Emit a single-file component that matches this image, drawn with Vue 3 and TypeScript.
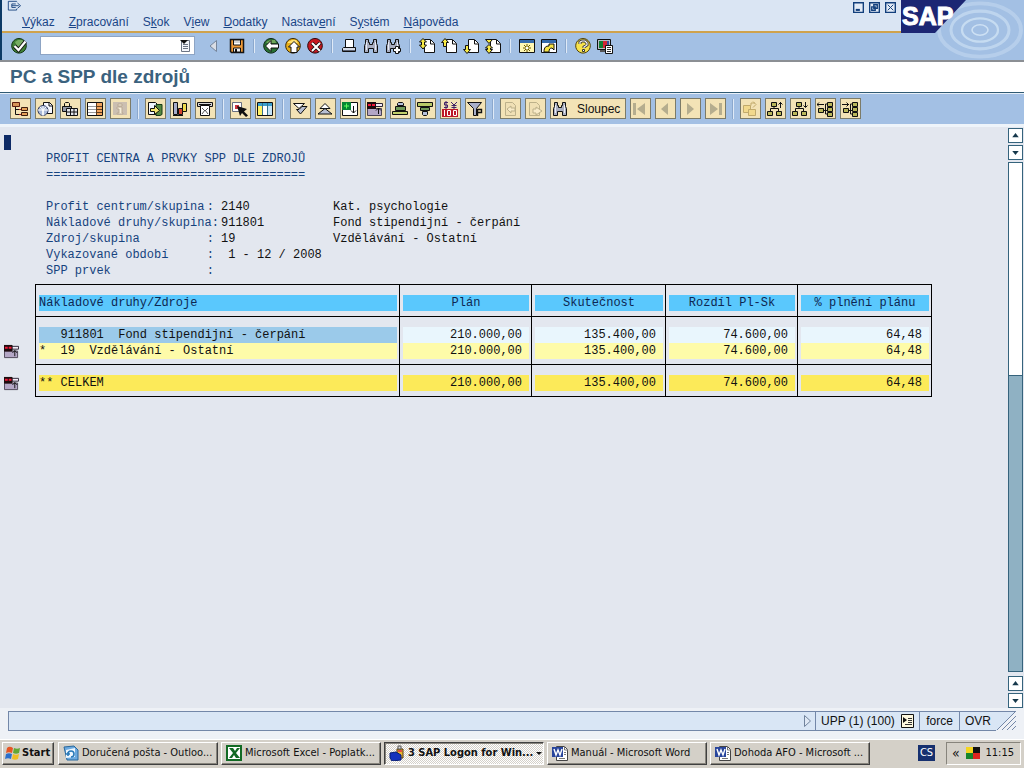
<script setup lang="ts">
import { defineComponent, h } from 'vue'

// [path data, fill, stroke?, stroke width?]
type Shape = [string, string, string?, number?]

const K = '#101010'
const doc = 'M5.5 1.5h6l4 4v9h-10z'
const disc = 'M8 .5a7.3 7.3 0 1 0 .01 0z'
const binoculars: Shape[] = [
  ['M2.5 1.5h3v3h1v2h3v-2h1v-3h3v4l1 2v7h-4v-4h-5v4h-4v-7l1-2z', '#a9aec0', K],
  ['M3.5 4v8M12.5 4v8', 'none', '#e9ecf4'],
]
const orgBox = (x: number, y: number): Shape => [`M${x}.5 ${y}.5h5v4h-5z`, '#b9b75a', K]

const icons: Record<string, Shape[]> = {
  session: [['M11 2V1.5H1.5v10H11V10', 'none', '#123f7c'], ['M10 4.5H5.5v4H10M5.5 6.5h8M12 3.5l3.5 3L12 9.5', 'none', '#123f7c']],
  ok: [[disc, '#3f7f36', '#123412'], ['M4 4l3-2h4l2 2v2l-6 4z', '#77ad62'], ['M3.5 8l4 4 7-8.5', 'none', K, 4], ['M3.5 8l4 4 7-8.5', 'none', '#fff', 2.2]],
  collapse: [['M11.5 2.5v11L5 8z', '#d9dde5', '#75859b']],
  save: [['M1.5 1.5h13v13h-12l-1-1z', '#ef9a38', '#151515', 1.5], ['M4.5 2h7v5h-7z', '#fff', K], ['M4.5 10h7v4h-7z', '#efefef', K], ['M6 11h2v3H6z', K], ['M5 4h6', 'none', '#aaa']],
  back: [[disc, '#287033', '#102817'], ['M3 4l4-2h5l1 3H4z', '#70a75a'], ['M8 2.5L2.5 8 8 13.5v-3.5h7.5V6H8z', '#fff', K]],
  exit: [[disc, '#e7ae18', '#372707'], ['M3 4l4-2h4l2 3H3z', '#ffe374'], ['M9 3.5L3.5 9H6v5.5h6V9h2.5z', '#fff', K]],
  cancel: [[disc, '#c71920', '#2d0709'], ['M5 5l8 8M13 5l-8 8', 'none', K, 3.6], ['M5 5l8 8M13 5l-8 8', 'none', '#fff', 2]],
  print: [['M4.5 1.5h8v8h-8z', '#fff', K], ['M2.5 9.5h12v4h-13v-3z', '#d7dce7', K], ['M2 12.5h12', 'none', '#5b6374']],
  find: binoculars,
  findNext: [...binoculars, ['M8.5 10.5h2v-2h3v2h2v3h-2v2h-3v-2h-2z', '#fff', K]],
  first: [[doc, '#fff', K], ['M11.5 2v4H15', 'none', K], ['M4 .5l-3.500 3.500h2v3h-2l3.500 4 3.500-4h-2V4h2z', '#f9ec47', K]],
  prev: [[doc, '#fff', K], ['M11.5 2v4H15', 'none', K], ['M4 .5L.5 4.500h2v4h3v-4h2z', '#f9ec47', K]],
  next: [[doc, '#fff', K], ['M11.5 2v4H15', 'none', K], ['M4 15.5L.5 11.500h2v-4h3v4h2z', '#f9ec47', K]],
  last: [[doc, '#fff', K], ['M11.5 2v4H15', 'none', K], ['M.5 1.5h7l-3.500 4zM4 6.500l3.500 3.500H5.500v1.500h2L4 15.500.5 11.500h2V10h-2z', '#f9ec47', K]],
  newSession: [['M.5 1.5h15v13H.5z', '#fff7b4', K], ['M1 2h14v3H1z', '#356bad'], ['M8 6v8M4 10h8M5 7l6 6M11 7l-6 6', 'none', '#6c5a00'], ['M7 9h2v2H7z', '#fff']],
  shortcut: [['M.5 1.5h15v13H.5z', '#fff', K], ['M1 2h14v3H1z', '#356bad'], ['M3 14c0-5 2-6 5-6V6h5v6l-2-2c-2 0-3 1-3 4z', '#f9e544', K]],
  help: [[disc, '#f7e34c', '#504009'], ['M5 6V4l2-1h3l2 2v2L9 9v1', 'none', '#333', 3], ['M5 6V4l2-1h3l2 2v2L9 9v1', 'none', '#fff', 1.2], ['M7.5 11.5h2v2h-2z', '#fff', '#333']],
  layout: [['M.5 1.5h13v10H.5z', '#b9bcc5', K], ['M2 3h4v7H2z', '#127b34'], ['M6 3h4v7H6z', '#d42335'], ['M10 3h2v7h-2z', '#324d9f'], ['M3 12h7v2H3z', '#555'], ['M8.5 7.5h7v8h-7z', '#fff', K], ['M10 9.5h4M10 11.5h4M10 13.5h4', 'none', '#333']],
  tree: [['M.5 1.5h7v4h-7z', '#d59458', '#5c1d0e'], ['M3.5 6v7.5H9M4 8.5h6', 'none', K], ['M9.500 6.500h6v3h-6zM9.500 11.500h6v3h-6z', '#e4a058', '#3c1d0e'], ['M7 8h2v1H7zM7 13h2v1H7z', '#b11818']],
  globe: [['M6.5 1.5h6l3 3v8h-9z', '#f7f8ff', K], ['M12 1v4h4', 'none', K], ['M6 4.5a5 5 0 1 0 .01 0z', '#aab9d8', '#303a5d'], ['M6 5v10M1 9h10M3 6c3 2 4 6 2 8M9 6c-3 2-4 6-2 8', 'none', '#fff']],
  lockTable: [['M2.500 6V2.500l1-1h3l1 1V6', 'none', K], ['M.5 5.5h9v5h-9z', '#9197a6', K], ['M4.500 7.500h11v7h-11zM4 11h11M8.500 7.500v7M12 7.500v7', '#e3e5eb', K]],
  grid: [['M.5 1.5h15v13H.5z', '#fff', K], ['M1 5.5h8M1 8.5h8M1 11.5h8', 'none', '#999'], ['M9 2h6v12H9z', '#f0a25b'], ['M9 5.5h6M9 8.5h6M9 11.5h6M9.5 2v12', 'none', '#5d3c1c']],
  info: [['M1 1h14v13H1z', '#cbbfb1'], ['M6 3h4v2H6zM5 6h5v6h1v1H5v-1h2V8H5z', '#f5edda', '#b9a994']],
  export: [['M1.5 1.5h7l3 3v9h-10z', '#f1f6ff', K], ['M9 3.5h6v10l-2 1H9z', '#55873f', '#173b19'], ['M3.500 7.500h4v-3l5 5-5 4v-3h-4z', '#f5e76f', K]],
  chart: [['M1.5 1.5h4v12h-4z', '#a6adca', K], ['M6.5 7.5h4v6h-4z', '#d54430', K], ['M10.5 2.5h4v8h-4z', '#f1db4c', K], ['M1 14.500h10', 'none', K]],
  envelope: [['M.5 1.5h15v4H.5z', '#d4d4d4', K], ['M3.5 4.5h9v10h-9z', '#fff', K], ['M5 7l3 3 3-3M5 13l3-4 3 4', 'none', '#555'], ['M2 3.5h12', 'none', K]],
  choose: [['M.5 1.5h9v9h-9z', '#fff', '#687080'], ['M3 4h4v4H3z', '#cf3540'], ['M5 5l10 3-3 2.500 4 4-2 1.500-4-4-2 3z', K]],
  columns: [['M.5 1.5h15v13H.5z', '#fff', K], ['M1 2h14v3H1z', '#3ba0cd'], ['M1 5h4v9H1z', '#fff265'], ['M11 5h4v9h-4z', '#c6e4f6'], ['M5.5 2v12M10.5 2v12', 'none', '#34728b']],
  down: [['M1.500 2.500h11l-5.500 5z', '#fff', K], ['M10 5.500h5l-6.500 7.500-4-4.500h2.500z', '#b7bfd3', K]],
  up: [['M8 2.500l5 5H3z', '#fff', K], ['M8 7.500l7 5.500H1z', '#b7bfd3', K]],
  expandRow: [['M.5 1.5h15v13H.5z', '#fff', K], ['M0 1h9v8H0z', '#078632'], ['M4.500 2.500v5M2 5h5', 'none', '#5cff5c'], ['M11.5 5v7M9 9.5l2.500 2.500L14 9.500', 'none', K]],
  sumRow: [['M.5 7.5h14v7H.5z', '#b4a7c6', '#4b4455'], ['M8.500 2.500h7v3h-7z', '#f3ecf6', '#2b2435'], ['M0 1h9v7H0z', '#1c0b0e'], ['M1 4h3M5 4h3', 'none', '#ef1838', 2], ['M11.500 13V7M9 9.500L11.500 7 14 9.500', 'none', K]],
  sortUp: [['M5.500 2.500l1-1h4l1 1v2h-6z', '#b6c1db', K], ['M3.500 5.500h10v4h-10z', '#6f9a58', K], ['M.5 10.5h15v3H.5z', '#c0cf6b', K]],
  sortDown: [['M.5 1.5h15v4H.5z', '#b7c967', K], ['M3.500 6.500h9v3h-9z', '#6f9a58', K], ['M5.500 10.500h5v3l-1 1h-3l-1-1z', '#b6c1db', K]],
  currency: [['M6 1.500H2.500v2.500h3v2.500H2M4 0v8M9 1l3 3 3-3M12 4v4M9.500 4.500h5M9.500 6.500h5', 'none', '#422368'], ['M0 8h16v8H0z', '#bc1827'], ['M2.5 9v6M5.5 9.5h3v5h-3zM11.5 9.5h3v5h-3z', 'none', '#fff']],
  filter: [['M.5 1.500h14l-5 6v7h-3v-7z', '#a8afc8', K], ['M10.500 15V8.500h4v3h-4', 'none', K, 1.4]],
  ghostLeft: [['M3.5 1.5h7l3 3v10h-10z', '#f0e0b5', '#bdb18a'], ['M9 5L5 8l4 4v-2h4V7H9z', '#f8ebc8', '#bdb18a']],
  ghostRight: [['M2.5 1.5h7l3 3v10h-10z', '#f0e0b5', '#bdb18a'], ['M9 6l6 4-6 4v-2H6V8h3z', '#f8ebc8', '#bdb18a']],
  pageFirst: [['M1 2h3v12H1zM13 2v12L5 8z', '#b5ad8e']],
  pagePrev: [['M11 2v12L4 8z', '#b5ad8e']],
  pageNext: [['M5 2v12l7-6z', '#b5ad8e']],
  pageLast: [['M12 2h3v12h-3zM3 2v12l8-6z', '#b5ad8e']],
  ghostBoxes: [['M1.5 4.5h7v7h-7z', '#f2d98c', '#c1aa6c'], ['M6.5 8.5h7v6h-7z', '#f2d98c', '#c1aa6c'], ['M9 4.500V2h4M11 .5l3 3-3 3', 'none', '#c1aa6c']],
  orgUp: [orgBox(4, 1), orgBox(0, 10), orgBox(9, 10), ['M7 6v2M3.500 10V7.500h8V10M13.500 7V1M11.500 3.500l2-2 2 2', 'none', K]],
  orgDown: [orgBox(4, 1), orgBox(0, 10), orgBox(9, 10), ['M7 6v2M3.500 10V7.500h8V10M13.500 1v5M11.500 4.500l2 2 2-2', 'none', K]],
  orgLeft: [orgBox(1, 7), orgBox(10, 1), orgBox(10, 6), orgBox(10, 11), ['M6 9.500h4M8.500 3v10H10M8.500 3H10M0 3.500h7M2 1.500l-2 2 2 2', 'none', K]],
  orgRight: [orgBox(1, 7), orgBox(10, 1), orgBox(10, 6), orgBox(10, 11), ['M6 9.500h4M8.500 3v10H10M8.500 3H10M0 3.500h7M4.500 1.500l2 2-2 2', 'none', K]],
  list: [['M3.5 2.5h8v11h-8z', '#f4f6fb', '#6b7484'], ['M5 6.5h5M5 8.5h5M5 10.5h5', 'none', '#6b7484'], ['M2 2h8l-4 4z', '#111']],
  status: [['M2.5 1.5h12v13h-12z', '#fdf8df', '#111'], ['M4 4l4 3-4 3z', '#111'], ['M9 5.5h4M9 7.5h4M9 9.5h4M6 11.5h7', 'none', '#333']],
  play: [['M5.5 2.5v11l6-5.5z', '#dfe8f4', '#71839c']],
  minimize: [['M1 1h14v14H1z', '#e3ebf6', '#123f7c', 2], ['M4 10h6v3H4z', '#123f7c']],
  restore: [['M1 1h14v14H1z', '#e3ebf6', '#123f7c', 2], ['M7 4h5v5H7zM4 7h5v5H4z', '#e3ebf6', '#123f7c', 2]],
  close: [['M1 1h14v14H1z', '#e3ebf6', '#123f7c', 2], ['M4 4l8 8M12 4l-8 8', 'none', '#123f7c', 1.4]],
  windows: [['M2 3c2-2 4-1 6 0L7 8C5 7 3 7 1 8z', '#e65624'], ['M9 3c2 1 4 1 6 0l-1 5c-2 1-4 1-6 0z', '#62a835'], ['M1 9c2-1 4-1 6 0l-1 5c-2-1-4-1-6 0z', '#2c70cb'], ['M8 9c2 1 4 1 6 0l-1 5c-2 1-4 1-6 0z', '#efbd23']],
  outlook: [['M1 2l10-1 4 4v10H4z', '#6ba9df', '#28689d'], ['M3 5l9-2v9l-9 1z', '#eef7ff'], ['M5 9a3 3 0 1 1 3 3M3 9h4M5 7v4', 'none', '#2879b8', 1.6]],
  excel: [['M1 1h14v14H1z', '#fff', '#126a24', 2], ['M3 3h4l2 3 2-3h3l-4 5 4 5h-4l-2-3-2 3H3l4-5z', '#126a24']],
  sapLogon: [['M8 4h6v9H8z', '#eab52e', '#543a11'], ['M9 1h3v3H9z', '#ddd', '#555'], ['M9 5h4v2H9z', '#e7503c'], ['M1 8l6-1 5 3v5l-9 1-2-3z', '#1732bd', '#091e76']],
  word: [['M4.5 1.5h8l3 3v11h-11z', '#fff', '#444'], ['M12.500 1v4H16M12 7.500h2M12 9.500h2M7 13.500h6', 'none', '#777'], ['M0 2h11v10H0z', '#28459c'], ['M2 4l2 6 2-5 2 5 2-6', 'none', '#fff', 1.4]],
  tray: [['M1 2h7v6H1z', '#f4d51d'], ['M8 2h7v6H8z', '#111'], ['M1 8h7v6H1z', '#17852b'], ['M8 8h7v6H8z', '#dd2520']],
  arrowUp: [['M8 5l4 5H4z', '#16384b']],
  arrowDown: [['M4 6h8l-4 5z', '#16384b']],
}

const PixelIcon = defineComponent({
  props: { name: { type: String, required: true } },
  setup: (props) => () =>
    h(
      'svg',
      { viewBox: '0 0 16 16', class: 'icon', 'aria-hidden': 'true' },
      (icons[props.name] ?? []).map(([d, fill, stroke, w]) =>
        h('path', { d, fill, stroke: stroke ?? 'none', 'stroke-width': w ?? 1 }),
      ),
    ),
})

const menus: [string, string, string][] = [
  ['', 'V', 'ýkaz'],
  ['', 'Z', 'pracování'],
  ['S', 'k', 'ok'],
  ['V', 'i', 'ew'],
  ['', 'D', 'odatky'],
  ['Nastav', 'e', 'ní'],
  ['S', 'y', 'stém'],
  ['', 'N', 'ápověda'],
]

const standardTools = [
  ['back', 'exit', 'cancel'],
  ['print', 'find', 'findNext'],
  ['first', 'prev', 'next', 'last'],
  ['newSession', 'shortcut'],
  ['help', 'layout'],
]

const reportTools = [
  ['tree', 'globe', 'lockTable', 'grid', 'info'],
  ['export', 'chart', 'envelope'],
  ['choose', 'columns'],
  ['down', 'up', 'expandRow', 'sumRow', 'sortUp', 'sortDown', 'currency', 'filter'],
  ['ghostLeft', 'ghostRight', 'find', 'pageFirst', 'pagePrev', 'pageNext', 'pageLast'],
  ['ghostBoxes', 'orgUp', 'orgDown', 'orgLeft', 'orgRight'],
]

const params = [
  { label: 'Profit centrum/skupina', value: '2140', text: 'Kat. psychologie' },
  { label: 'Nákladové druhy/skupina', value: '911801', text: 'Fond stipendijní - čerpání' },
  { label: 'Zdroj/skupina', value: '19', text: 'Vzdělávání - Ostatní' },
  { label: 'Vykazované období', value: ' 1 - 12 / 2008', text: '' },
  { label: 'SPP prvek', value: '', text: '' },
]

const columns = ['Plán', 'Skutečnost', 'Rozdíl Pl-Sk', '% plnění plánu']
const amounts = ['210.000,00', '135.400,00', '74.600,00', '64,48']
const rows = [
  { kind: 'detail', name: '   911801  Fond stipendijní - čerpání', marker: false },
  { kind: 'subtotal', name: '*  19  Vzdělávání - Ostatní', marker: true },
  { kind: 'total', name: '** CELKEM', marker: true },
]

const tasks = [
  { icon: 'outlook', title: 'Doručená pošta - Outloo...', active: false },
  { icon: 'excel', title: 'Microsoft Excel - Poplatk...', active: false },
  { icon: 'sapLogon', title: '3 SAP Logon for Win...', active: true },
  { icon: 'word', title: 'Manuál - Microsoft Word', active: false },
  { icon: 'word', title: 'Dohoda AFO - Microsoft ...', active: false },
]
const ripples = [8, 18, 29, 41]
</script>

<template>
  <div class="screen">
    <header class="top">
      <div class="top-main">
        <div class="menu-area">
          <div class="menu-left">
            <PixelIcon name="session" class="session" />
            <nav class="menus">
              <button v-for="m in menus" :key="m.join('')" type="button">{{ m[0] }}<u>{{ m[1] }}</u>{{ m[2] }}</button>
            </nav>
          </div>
          <div class="window-buttons">
            <button v-for="b in ['minimize', 'restore', 'close']" :key="b" type="button" :aria-label="b">
              <PixelIcon :name="b" />
            </button>
          </div>
        </div>
        <div class="standard-bar">
          <button type="button" aria-label="enter"><PixelIcon name="ok" /></button>
          <div class="command">
            <input type="text" aria-label="command" />
            <button type="button" aria-label="history"><PixelIcon name="list" /></button>
          </div>
          <div class="save-group">
            <button type="button" aria-label="collapse"><PixelIcon name="collapse" /></button>
            <button type="button" aria-label="save"><PixelIcon name="save" /></button>
          </div>
          <template v-for="(group, i) in standardTools" :key="i">
            <i class="divider"></i>
            <div class="tool-group">
              <button v-for="t in group" :key="t" type="button" :aria-label="t"><PixelIcon :name="t" /></button>
            </div>
          </template>
        </div>
      </div>
      <svg class="brand" viewBox="0 0 123 60" role="img" aria-label="SAP">
        <rect width="123" height="60" fill="#a3c0e4" />
        <g fill="none" stroke="#e4f2fc">
          <ellipse v-for="r in ripples" :key="r" cx="79" cy="30" :rx="r" :ry="r * 0.65" :stroke-width="r / 14 + 1" :opacity="0.75 - r / 90" />
        </g>
        <path d="M0 0h65L34 33H0z" fill="#1c2673" />
        <text x="1" y="25" class="brand-text">SAP</text>
      </svg>
    </header>

    <h1>PC a SPP dle zdrojů</h1>

    <div class="report-bar">
      <template v-for="(group, i) in reportTools" :key="i">
        <i v-if="i" class="divider"></i>
        <div class="tool-group">
          <button v-for="t in group" :key="t" type="button" :aria-label="t === 'find' ? undefined : t">
            <PixelIcon :name="t" /><span v-if="t === 'find'">Sloupec</span>
          </button>
        </div>
      </template>
    </div>

    <main>
      <div class="report">
        <i class="caret"></i>
        <h2>PROFIT CENTRA A PRVKY SPP DLE ZDROJŮ<br />====================================</h2>
        <dl>
          <template v-for="p in params" :key="p.label">
            <dt><span>{{ p.label }}</span><span>:</span></dt>
            <dd>{{ p.value }}</dd>
            <dd>{{ p.text }}</dd>
          </template>
        </dl>
        <table>
          <colgroup>
            <col class="c-gutter" /><col class="c-name" /><col class="c-a" /><col class="c-b" /><col class="c-a" /><col class="c-last" />
          </colgroup>
          <thead>
            <tr>
              <td class="gutter"></td>
              <th scope="col" class="name"><span>Nákladové druhy/Zdroje</span></th>
              <th v-for="c in columns" :key="c" scope="col"><span>{{ c }}</span></th>
            </tr>
          </thead>
          <tbody>
            <tr v-for="r in rows" :key="r.kind" :class="r.kind">
              <td class="gutter"><PixelIcon v-if="r.marker" name="sumRow" /></td>
              <td class="name"><span>{{ r.name }}</span></td>
              <td v-for="a in amounts" :key="a" class="num"><span>{{ a }}</span></td>
            </tr>
          </tbody>
        </table>
      </div>
      <div class="scrollbar">
        <button type="button" aria-label="top"><PixelIcon name="arrowUp" /></button>
        <button type="button" aria-label="line down"><PixelIcon name="arrowDown" /></button>
        <div class="track"><div class="thumb"></div></div>
        <button type="button" aria-label="line up"><PixelIcon name="arrowUp" /></button>
        <button type="button" aria-label="bottom"><PixelIcon name="arrowDown" /></button>
      </div>
    </main>

    <div class="status-bar">
      <div class="message"><PixelIcon name="play" /></div>
      <div class="system">UPP (1) (100) <PixelIcon name="status" /></div>
      <div class="host">force</div>
      <div class="mode">OVR</div>
      <svg class="grip" viewBox="0 0 20 20" aria-hidden="true">
        <path d="M0 0h20L0 20z" fill="#d9e6f5" />
        <path d="M0 .5h20M20 0L1 19M20 5L6 19M20 10l-9 9M20 15l-4 4" fill="none" stroke="#7387a8" />
      </svg>
    </div>

    <footer>
      <button type="button" class="start"><PixelIcon name="windows" />Start</button>
      <div class="tasks">
        <button v-for="t in tasks" :key="t.title" type="button" :class="{ active: t.active }">
          <PixelIcon :name="t.icon" /><span>{{ t.title }}</span><i v-if="t.active" class="drop"></i>
        </button>
      </div>
      <span class="lang">CS</span>
      <div class="tray"><span class="more">«</span><PixelIcon name="tray" /><time>11:15</time></div>
    </footer>
  </div>
</template>

<style>
html,
body {
  margin: 0;
  background: #eef1f6;
}
</style>

<style scoped>
.screen {
  display: flex;
  flex-direction: column;
  min-height: 100vh;
  font: 12px/16px "Liberation Sans", Arial, sans-serif;
  color: #111;
}
.screen * {
  box-sizing: border-box;
}
button {
  display: flex;
  align-items: center;
  padding: 0;
  border: 0;
  background: none;
  font: inherit;
  color: inherit;
  white-space: nowrap;
}
.icon {
  display: block;
  flex: none;
  width: 16px;
  height: 16px;
}
.top {
  display: flex;
  height: 62px;
  border-bottom: 2px solid #8b8f94;
  background: #a3c0e4;
}
.top-main {
  flex: 1;
  min-width: 0;
  border-left: 2px solid #0c3a66;
}
.menu-area {
  display: flex;
  justify-content: space-between;
  height: 33px;
  border-bottom: 2px solid #cfa24c;
  background: #dae5f3;
}
.menu-left {
  padding-left: 4px;
}
.session {
  height: 14px;
}
.menus {
  display: flex;
  gap: 14px;
  padding-left: 16px;
  color: #1b4587;
}
.window-buttons {
  display: flex;
  gap: 5px;
  padding: 2px 5px;
}
.window-buttons .icon {
  width: 11px;
  height: 11px;
}
.window-buttons button {
  height: 11px;
}
.standard-bar {
  display: flex;
  align-items: center;
  height: 25px;
  padding-left: 9px;
}
.command {
  display: flex;
  align-items: center;
  width: 155px;
  height: 19px;
  margin-left: 13px;
  border: 1px solid #8da4c4;
  background: #fff;
}
.command input {
  flex: 1;
  min-width: 0;
  padding: 0 4px;
  border: 0;
  outline: 0;
  background: none;
  font: inherit;
}
.save-group {
  display: flex;
  gap: 8px;
  margin-left: 10px;
}
.standard-bar .tool-group {
  display: flex;
  gap: 6px;
}
.divider {
  flex: none;
  width: 2px;
  height: 14px;
  margin: 0 8px;
  border-left: 1px solid #8ba8cd;
  border-right: 1px solid #dfeaf7;
}
.brand {
  display: block;
  flex: none;
  width: 123px;
  height: 60px;
}
.brand-text {
  font: bold 25px "Liberation Sans", Arial, sans-serif;
  fill: #fff;
  stroke: #fff;
}
h1 {
  height: 31px;
  margin: 0;
  padding-left: 10px;
  border-bottom: 1px solid #2f5a73;
  background: #fff;
  font: bold 19px/30px "Liberation Sans", Arial, sans-serif;
  color: #3b627e;
}
.report-bar {
  display: flex;
  align-items: center;
  height: 34px;
  padding: 0 10px 1px;
  border-top: 1px solid #e7eff8;
  border-bottom: 3px solid #eef4fa;
  background: #a3c0e4;
}
.report-bar .tool-group {
  display: flex;
  gap: 4px;
}
.report-bar .divider {
  height: 20px;
  margin: 0 6px;
}
.report-bar button {
  height: 21px;
  padding: 0 2px 0 1px;
  border: 1px solid #7c7b68;
  background: #f3e3b6;
}
.report-bar button span {
  padding: 0 3px 0 9px;
}
main {
  display: flex;
  flex: 1;
  background: #e3e7ef;
}
.report {
  flex: 1;
  min-width: 0;
  position: relative;
  padding-top: 24px;
  font: 12px/16px "Liberation Mono", "Courier New", monospace;
}
.caret {
  position: absolute;
  left: 4px;
  top: 8px;
  width: 7px;
  height: 15px;
  background: #0d2a66;
}
h2 {
  margin: 0 0 16px 46px;
  font: inherit;
  color: #16437e;
}
dl {
  display: grid;
  grid-template-columns: 168px 105px auto;
  column-gap: 7px;
  grid-auto-rows: 16px;
  justify-content: start;
  margin: 0 0 5px 46px;
}
dt {
  display: flex;
  justify-content: space-between;
  white-space: nowrap;
  color: #16437e;
}
dd {
  margin: 0;
  white-space: pre;
}
table {
  table-layout: fixed;
  width: 932px;
  border-collapse: separate;
  border-spacing: 0;
}
.c-gutter {
  width: 35px;
}
.c-name {
  width: 364px;
}
.c-a {
  width: 132px;
}
.c-b {
  width: 134px;
}
.c-last {
  width: 135px;
}
th,
td {
  padding: 0 2px 0 3px;
  border-left: 1px solid #000;
  font-weight: normal;
  text-align: center;
}
th:last-child,
td:last-child {
  border-right: 1px solid #000;
}
th,
.detail td,
.total td {
  padding-top: 10px;
  border-top: 1px solid #000;
}
th,
.subtotal td,
.total td {
  padding-bottom: 5px;
}
.total td {
  border-bottom: 1px solid #000;
}
tr .gutter {
  padding-left: 4px;
  border: 0;
}
.gutter .icon {
  width: 15px;
  height: 15px;
}
th span,
td span {
  display: block;
  height: 16px;
  white-space: pre;
}
th span {
  background: #5ac8fd;
  color: #0d2752;
}
.name {
  text-align: left;
}
.num {
  text-align: right;
}
.num span {
  padding-right: 7px;
}
.detail span {
  background: #e9f6fd;
}
.detail .name span {
  background: #9bcaea;
}
.subtotal span {
  background: #fefba9;
}
.total span {
  background: #fcea59;
}
.scrollbar {
  display: flex;
  flex-direction: column;
  gap: 2px;
  width: 16px;
  padding: 1px 1px 0 0;
}
.scrollbar button {
  justify-content: center;
  height: 15px;
  border: 1px solid #35637c;
  background: #fff;
}
.scrollbar .icon {
  width: 13px;
  height: 13px;
}
.track {
  flex: 1;
  margin-bottom: 2px;
  border: 1px solid #35637c;
  background: #8fb1c3;
}
.thumb {
  height: 42%;
  border-bottom: 1px solid #35637c;
  background: #fff;
}
.status-bar {
  display: flex;
  height: 31px;
  padding: 3px 8px 8px;
}
.status-bar > div {
  display: flex;
  align-items: center;
  border: 1px solid #7387a8;
  border-right: 0;
  background: #d9e6f5;
}
.status-bar .message {
  flex: 1;
  justify-content: flex-end;
}
.system {
  gap: 4px;
  width: 104px;
  padding-left: 5px;
}
.host {
  width: 40px;
  justify-content: center;
}
.mode {
  width: 37px;
  justify-content: center;
}
.grip {
  width: 20px;
  height: 20px;
}
footer {
  display: flex;
  align-items: center;
  height: 29px;
  padding: 0 3px 2px 2px;
  border-top: 1px solid #fff;
  background: #d4d0c8;
  font: 11px/16px "DejaVu Sans Condensed", "DejaVu Sans", sans-serif;
}
footer button {
  height: 23px;
  padding: 0 4px;
  gap: 3px;
  border: 1px solid;
  border-color: #fff #404040 #404040 #fff;
  box-shadow: inset -1px -1px #87847c;
}
.start {
  gap: 1px;
  width: 52px;
  padding: 0 2px;
  font-weight: bold;
}
.tasks {
  display: flex;
  flex: 0 1 812px;
  gap: 3px;
  min-width: 0;
  margin: 0 auto 0 4px;
}
.tasks button {
  flex: 1;
  min-width: 0;
}
.tasks button.active {
  border-color: #404040 #fff #fff #404040;
  box-shadow: inset 1px 1px #87847c;
  background: repeating-conic-gradient(#fff 0 25%, #d4d0c8 0 50%) 0 0 / 2px 2px;
  font-weight: bold;
}
.drop {
  margin-left: auto;
  border: 3px solid transparent;
  border-top-color: #111;
  border-bottom: 0;
}
.lang {
  width: 17px;
  background: #16306f;
  color: #fff;
  text-align: center;
}
.tray {
  display: flex;
  align-items: center;
  justify-content: space-between;
  width: 75px;
  height: 23px;
  margin-left: 11px;
  padding: 0 6px 0 5px;
  border: 1px solid;
  border-color: #87847c #fff #fff #87847c;
}
.more {
  font-size: 14px;
}
</style>
